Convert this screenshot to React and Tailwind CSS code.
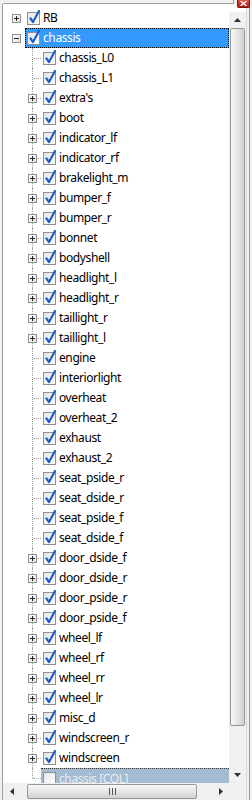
import React from 'react';

const children = [
  { name: 'chassis_L0' },
  { name: 'chassis_L1' },
  { name: "extra's", plus: true },
  { name: 'boot', plus: true },
  { name: 'indicator_lf', plus: true },
  { name: 'indicator_rf', plus: true },
  { name: 'brakelight_m', plus: true },
  { name: 'bumper_f', plus: true },
  { name: 'bumper_r', plus: true },
  { name: 'bonnet', plus: true },
  { name: 'bodyshell', plus: true },
  { name: 'headlight_l', plus: true },
  { name: 'headlight_r', plus: true },
  { name: 'taillight_r', plus: true },
  { name: 'taillight_l', plus: true },
  { name: 'engine' },
  { name: 'interiorlight' },
  { name: 'overheat' },
  { name: 'overheat_2' },
  { name: 'exhaust' },
  { name: 'exhaust_2' },
  { name: 'seat_pside_r' },
  { name: 'seat_dside_r' },
  { name: 'seat_pside_f' },
  { name: 'seat_dside_f' },
  { name: 'door_dside_f', plus: true },
  { name: 'door_dside_r', plus: true },
  { name: 'door_pside_r', plus: true },
  { name: 'door_pside_f', plus: true },
  { name: 'wheel_lf', plus: true },
  { name: 'wheel_rf', plus: true },
  { name: 'wheel_rr', plus: true },
  { name: 'wheel_lr', plus: true },
  { name: 'misc_d', plus: true },
  { name: 'windscreen_r', plus: true },
  { name: 'windscreen', plus: true },
  { name: 'chassis [COL]', unchecked: true, inactive: true },
];

const ExpandBox = ({ open }) => (
  <div className="relative w-[9px] h-[9px] border border-[#919191] bg-gradient-to-br from-white to-[#e0e0e0]">
    <div className="absolute left-[1px] top-[3px] w-[5px] h-[1px] bg-[#222]" />
    {!open && <div className="absolute left-[3px] top-[1px] w-[1px] h-[5px] bg-[#222]" />}
  </div>
);

const CheckBox = ({ checked }) => (
  <div className="relative w-[13px] h-[13px] border border-[#8e8f8f] bg-gradient-to-br from-[#e6e6e6] to-white shrink-0">
    {checked && (
      <svg className="absolute left-[0px] top-[-3px]" width="13" height="14" viewBox="0 0 13 14">
        <path d="M2.5 8.5 L5 12 L11 1" fill="none" stroke="#1f5ec9" strokeWidth="2.2" strokeLinecap="round" strokeLinejoin="round" />
      </svg>
    )}
  </div>
);

const TreeRow = ({ level, name, plus, open, checked, selected, inactive, line, last }) => (
  <div className="relative flex h-[20px] shrink-0">
    {level === 1 && <div className="w-[16px] shrink-0" />}
    <div className="relative w-[22px] shrink-0 flex items-center">
      {line && (
        <>
          <div className={`absolute left-[13px] top-0 w-0 border-l border-dotted border-[#a0a0a0] ${last ? 'h-[10px]' : 'h-[20px]'}`} />
          <div className="absolute left-[14px] top-[10px] w-[8px] h-0 border-t border-dotted border-[#a0a0a0]" />
        </>
      )}
      {(plus || open) && (
        <div className="relative ml-[9px] bg-white">
          <ExpandBox open={open} />
        </div>
      )}
    </div>
    <div
      className={`flex-1 flex items-center pl-[2px] ${
        selected ? 'bg-[#3399ff] text-white outline outline-1 outline-dotted outline-black -outline-offset-1' : ''
      } ${inactive ? 'bg-[#a4bbd4] text-[#e8edf3] border-t border-dotted border-[#333]' : 'text-black'}`}
    >
      <CheckBox checked={checked} />
      <span className="ml-[3px] whitespace-nowrap tracking-[-0.4px]">{name}</span>
    </div>
  </div>
);

const Arrow = ({ dir }) => {
  const paths = {
    up: 'M0 4 L3.5 0 L7 4 Z',
    down: 'M0 0 L7 0 L3.5 4 Z',
    left: 'M4 0 L4 7 L0 3.5 Z',
    right: 'M0 0 L4 3.5 L0 7 Z',
  };
  const vertical = dir === 'up' || dir === 'down';
  return (
    <svg width={vertical ? 7 : 4} height={vertical ? 4 : 7} viewBox={vertical ? '0 0 7 4' : '0 0 4 7'}>
      <path d={paths[dir]} fill="#333" />
    </svg>
  );
};

export default function App() {
  return (
    <div className="w-[252px] h-[800px] bg-[#f0f0f0] flex flex-col overflow-hidden text-[12px] leading-none font-['Noto_Sans','DejaVu_Sans',sans-serif]">
      {/* top strip with close button */}
      <div className="flex h-[4px] shrink-0">
        <div className="w-[3px]" />
        <div className="mt-[3px] w-[230px] border-t border-[#a0a0a0]" />
        <div className="w-[1px] bg-[#a0a0a0]" />
        <div className="relative ml-[3px] w-[13px]">
          <div className="absolute left-0 top-0 w-[13px] h-[8px] rounded-b-[2px] bg-gradient-to-b from-[#e05545] to-[#b31b0e] border border-t-0 border-[#7a1208] flex items-center justify-center">
            <svg width="7" height="5" viewBox="0 0 7 5">
              <path d="M0.5 0 L6.5 5 M6.5 0 L0.5 5" stroke="white" strokeWidth="1.4" />
            </svg>
          </div>
        </div>
      </div>

      <div className="flex flex-1 min-h-0">
        <div className="w-[3px] border-r border-[#a0a0a0] shrink-0" />
        <div className="w-[243px] flex flex-col bg-white">
          <div className="flex flex-1 min-h-0">
            {/* tree */}
            <div className="flex-1 min-w-0 overflow-hidden flex flex-col pt-[4px]">
              <TreeRow level={0} name="RB" plus checked />
              <TreeRow level={0} name="chassis" open checked selected />
              {children.map((c, i) => (
                <TreeRow
                  key={c.name}
                  level={1}
                  name={c.name}
                  plus={c.plus}
                  checked={!c.unchecked}
                  inactive={c.inactive}
                  line
                  last={i === children.length - 1}
                />
              ))}
            </div>
            {/* vertical scrollbar */}
            <div className="w-[17px] shrink-0 mt-[8px] bg-[#f0f0f0] flex flex-col">
              <div className="h-[16px] shrink-0 flex items-center justify-center">
                <Arrow dir="up" />
              </div>
              <div className="h-[698px] shrink-0 mx-[1px] rounded-[2px] border border-[#979797] bg-gradient-to-r from-[#f7f7f7] via-[#e6e6e6] to-[#d0d0d0]" />
              <div className="flex-1" />
              <div className="h-[17px] shrink-0 flex items-center justify-center">
                <Arrow dir="down" />
              </div>
            </div>
          </div>
          {/* horizontal scrollbar */}
          <div className="h-[17px] shrink-0 flex bg-[#f0f0f0]">
            <div className="flex-1 flex items-center">
              <div className="w-[17px] flex items-center justify-center">
                <Arrow dir="left" />
              </div>
              <div className="ml-[7px] w-[170px] h-[15px] rounded-[2px] border border-[#979797] bg-gradient-to-b from-[#f7f7f7] via-[#e6e6e6] to-[#d0d0d0] flex items-center justify-center gap-[2px]">
                <div className="w-[1px] h-[7px] bg-[#555]" />
                <div className="w-[1px] h-[7px] bg-[#555]" />
                <div className="w-[1px] h-[7px] bg-[#555]" />
              </div>
              <div className="flex-1" />
              <div className="w-[17px] flex items-center justify-center">
                <Arrow dir="right" />
              </div>
            </div>
            <div className="w-[17px] bg-[#f0f0f0]" />
          </div>
        </div>
        <div className="w-[1px] bg-[#d8d8d8]" />
        <div className="w-[2px]" />
        <div className="w-[1px] bg-[#a0a0a0]" />
      </div>
    </div>
  );
}
